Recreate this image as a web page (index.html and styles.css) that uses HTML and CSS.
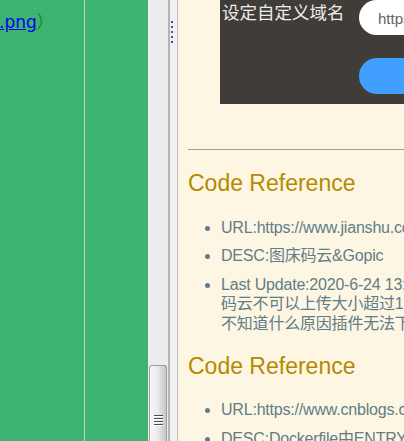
FILE: index.html
```html
<!DOCTYPE html>
<html lang="zh-CN">
<head>
<meta charset="utf-8">
<title>Code Reference</title>
<link rel="stylesheet" href="styles.css">
</head>
<body>
<div class="screen">
  <div class="left">
    <div class="col col-a">
      <p class="src"><a class="src-link" href="#">.png</a><span class="paren">）</span></p>
    </div>
    <div class="col col-b"></div>
  </div>
  <div class="vscroll">
    <div class="thumb">
      <div class="grip"><span></span><span></span><span></span><span></span></div>
    </div>
  </div>
  <div class="splitter">
    <div class="dots"><span></span><span></span><span></span><span></span><span></span></div>
  </div>
  <div class="right">
    <div class="doc">
      <div class="panel">
        <div class="panel-label">设定自定义域名</div>
        <div class="panel-input">https://gitee.com/</div>
        <div class="panel-spacer"></div>
        <div class="panel-button">保存</div>
      </div>
      <hr class="rule">
      <h2 class="ref-title">Code Reference</h2>
      <ul class="ref-list">
        <li>URL:https://www.jianshu.com/p/4a0f5e2b3c1d</li>
        <li>DESC:图床码云&amp;Gopic</li>
        <li>Last Update:2020-6-24 13:40<br>码云不可以上传大小超过1M的图片<br>不知道什么原因插件无法下载</li>
      </ul>
      <h2 class="ref-title">Code Reference</h2>
      <ul class="ref-list">
        <li>URL:https://www.cnblogs.com/p/12345678.html</li>
        <li>DESC:Dockerfile中ENTRYPOINT与CMD的区别</li>
      </ul>
    </div>
  </div>
</div>
</body>
</html>
```
FILE: styles.css
```css
html, body {
  margin: 0;
  padding: 0;
  width: 404px;
  height: 441px;
  overflow: hidden;
}

.screen {
  display: flex;
  height: 441px;
  overflow: hidden;
}

/* left green pane */
.left {
  display: flex;
  width: 148px;
  flex: none;
  background: #3cb371;
}

.col {
  height: 100%;
  overflow: hidden;
}

.col-a {
  width: 84px;
  border-right: 1px solid #c6cfc8;
}

.col-b {
  flex: 1;
}

.src {
  margin: 0;
  padding-top: 12px;
  font-family: "DejaVu Sans", "Noto Sans CJK SC", sans-serif;
  font-size: 17px;
  line-height: 20px;
  white-space: nowrap;
}

.src-link {
  margin-left: -1px;
  color: #0000ee;
  text-decoration: underline;
}

.paren {
  color: #168a1e;
}

/* vertical scrollbar */
.vscroll {
  width: 20px;
  flex: none;
  background: #ededed;
  padding-top: 365px;
  box-sizing: border-box;
  overflow: hidden;
}

.thumb {
  width: 18px;
  height: 108px;
  margin-left: 1px;
  box-sizing: border-box;
  border: 1px solid #9c9c9c;
  border-bottom: 0;
  border-radius: 3px 3px 0 0;
  background: linear-gradient(to right, #f7f7f7 0%, #ececec 45%, #c6c6c6 100%);
  display: flex;
  align-items: center;
  justify-content: center;
}

.grip {
  display: flex;
  flex-direction: column;
  gap: 2px;
  width: 9px;
}

.grip span {
  display: block;
  height: 1px;
  background: #4a4a4a;
  box-shadow: 0 1px 0 #ffffff;
}

/* splitter */
.splitter {
  width: 10px;
  flex: none;
  box-sizing: border-box;
  border-left: 2px solid #b3b3b3;
  border-right: 1px solid #c2c2c2;
  background: #f1f1f1;
  padding-top: 21px;
}

.dots {
  display: flex;
  flex-direction: column;
  gap: 3px;
  margin-left: 1px;
}

.dots span {
  display: block;
  width: 2px;
  height: 2px;
  background: #2d5c9c;
}

/* right document pane */
.right {
  flex: 1;
  min-width: 0;
  background: #fdf6e3;
  overflow: hidden;
}

.doc {
  width: 700px;
  padding-left: 10px;
  font-family: "Liberation Sans", "Noto Sans CJK SC", sans-serif;
}

.panel {
  margin-left: 32px;
  background: #403c37;
  display: grid;
  grid-template-columns: 139px 420px;
  row-gap: 23px;
  padding-bottom: 10px;
}

.panel-label {
  padding-left: 2px;
  color: #ececec;
  font-size: 17.5px;
  line-height: 26px;
}

.panel-input {
  height: 35px;
  box-sizing: border-box;
  padding: 2px 0 0 19px;
  line-height: 33px;
  border-radius: 18px;
  background: #ffffff;
  color: #606266;
  font-size: 15px;
}

.panel-button {
  height: 36px;
  border-radius: 18px;
  background: #409eff;
  color: #ffffff;
  font-size: 15px;
  line-height: 36px;
  text-align: center;
  width: 200px;
}

.rule {
  margin: 45px 0 0 0;
  border: 0;
  border-top: 1px solid #9d9d9d;
  height: 0;
}

.ref-title {
  margin: 20px 0;
  font-size: 23px;
  line-height: 1.2;
  font-weight: normal;
  color: #b58900;
}

.ref-list {
  margin: 0;
  padding-left: 33px;
  color: #617d89;
  font-size: 16px;
  line-height: 19.2px;
  letter-spacing: -0.2px;
}

.ref-list li {
  margin-bottom: 9.6px;
  white-space: nowrap;
}
```
